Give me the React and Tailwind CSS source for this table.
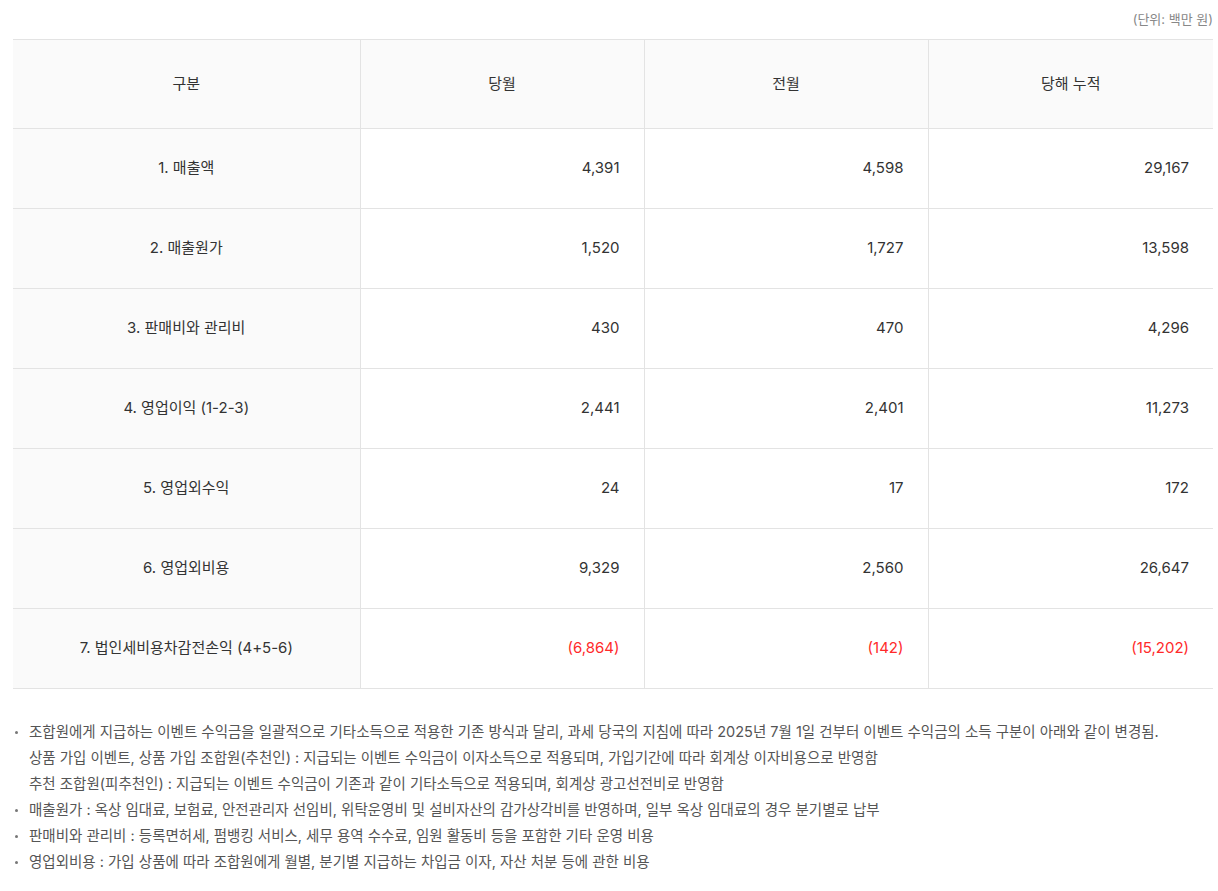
import React from 'react';

const rows = [
    { label: '1. 매출액', cur: '4,391', prev: '4,598', total: '29,167' },
    { label: '2. 매출원가', cur: '1,520', prev: '1,727', total: '13,598' },
    { label: '3. 판매비와 관리비', cur: '430', prev: '470', total: '4,296' },
    { label: '4. 영업이익 (1-2-3)', cur: '2,441', prev: '2,401', total: '11,273' },
    { label: '5. 영업외수익', cur: '24', prev: '17', total: '172' },
    { label: '6. 영업외비용', cur: '9,329', prev: '2,560', total: '26,647' },
    { label: '7. 법인세비용차감전손익 (4+5-6)', cur: '(6,864)', prev: '(142)', total: '(15,202)', negative: true },
];

const notes = [
    {
        bullet: true,
        text: '조합원에게 지급하는 이벤트 수익금을 일괄적으로 기타소득으로 적용한 기존 방식과 달리, 과세 당국의 지침에 따라 2025년 7월 1일 건부터 이벤트 수익금의 소득 구분이 아래와 같이 변경됨.',
    },
    { bullet: false, text: '상품 가입 이벤트, 상품 가입 조합원(추천인) : 지급되는 이벤트 수익금이 이자소득으로 적용되며, 가입기간에 따라 회계상 이자비용으로 반영함' },
    { bullet: false, text: '추천 조합원(피추천인) : 지급되는 이벤트 수익금이 기존과 같이 기타소득으로 적용되며, 회계상 광고선전비로 반영함' },
    { bullet: true, text: '매출원가 : 옥상 임대료, 보험료, 안전관리자 선임비, 위탁운영비 및 설비자산의 감가상각비를 반영하며, 일부 옥상 임대료의 경우 분기별로 납부' },
    { bullet: true, text: '판매비와 관리비 : 등록면허세, 펌뱅킹 서비스, 세무 용역 수수료, 임원 활동비 등을 포함한 기타 운영 비용' },
    { bullet: true, text: '영업외비용 : 가입 상품에 따라 조합원에게 월별, 분기별 지급하는 차입금 이자, 자산 처분 등에 관한 비용' },
];

const App = () => {
    return (
        <div className="bg-white min-h-[891px] px-[13px] pt-[10px] font-['Inter','Noto_Sans_CJK_KR',sans-serif] text-[#333]">
            <p className="text-right text-[13px] leading-[18px] text-[#888] -mr-[8px]">(단위: 백만 원)</p>

            <table className="w-[1200px] mt-[11px] table-fixed border-collapse text-[15px]">
                <colgroup>
                    <col className="w-[347px]" />
                    <col className="w-[284px]" />
                    <col className="w-[284px]" />
                    <col className="w-[285px]" />
                </colgroup>
                <thead>
                    <tr className="h-[89px] bg-[#fafafa] border-t border-b border-[#e3e3e3]">
                        <th className="font-normal text-center">구분</th>
                        <th className="font-normal text-center border-l border-[#e3e3e3]">당월</th>
                        <th className="font-normal text-center border-l border-[#e3e3e3]">전월</th>
                        <th className="font-normal text-center border-l border-[#e3e3e3]">당해 누적</th>
                    </tr>
                </thead>
                <tbody>
                    {rows.map(row => (
                        <tr key={row.label} className="h-[80px] border-b border-[#e3e3e3]">
                            <td className="bg-[#fafafa] text-center">{row.label}</td>
                            <td className={`text-right pr-[24px] border-l border-[#e3e3e3] ${row.negative ? 'text-[#ff2a2a]' : ''}`}>{row.cur}</td>
                            <td className={`text-right pr-[24px] border-l border-[#e3e3e3] ${row.negative ? 'text-[#ff2a2a]' : ''}`}>{row.prev}</td>
                            <td className={`text-right pr-[24px] border-l border-[#e3e3e3] ${row.negative ? 'text-[#ff2a2a]' : ''}`}>{row.total}</td>
                        </tr>
                    ))}
                </tbody>
            </table>

            <ul className="mt-[30px] text-[14.5px] leading-[26px] text-[#555]">
                {notes.map((note, i) => (
                    <li key={i} className="flex items-start">
                        <span className="w-[16px] h-[26px] shrink-0 flex items-center">
                            {note.bullet && <span className="ml-[2px] w-[3px] h-[3px] rounded-full bg-[#777]" />}
                        </span>
                        <span>{note.text}</span>
                    </li>
                ))}
            </ul>
        </div>
    );
};

export default App;
